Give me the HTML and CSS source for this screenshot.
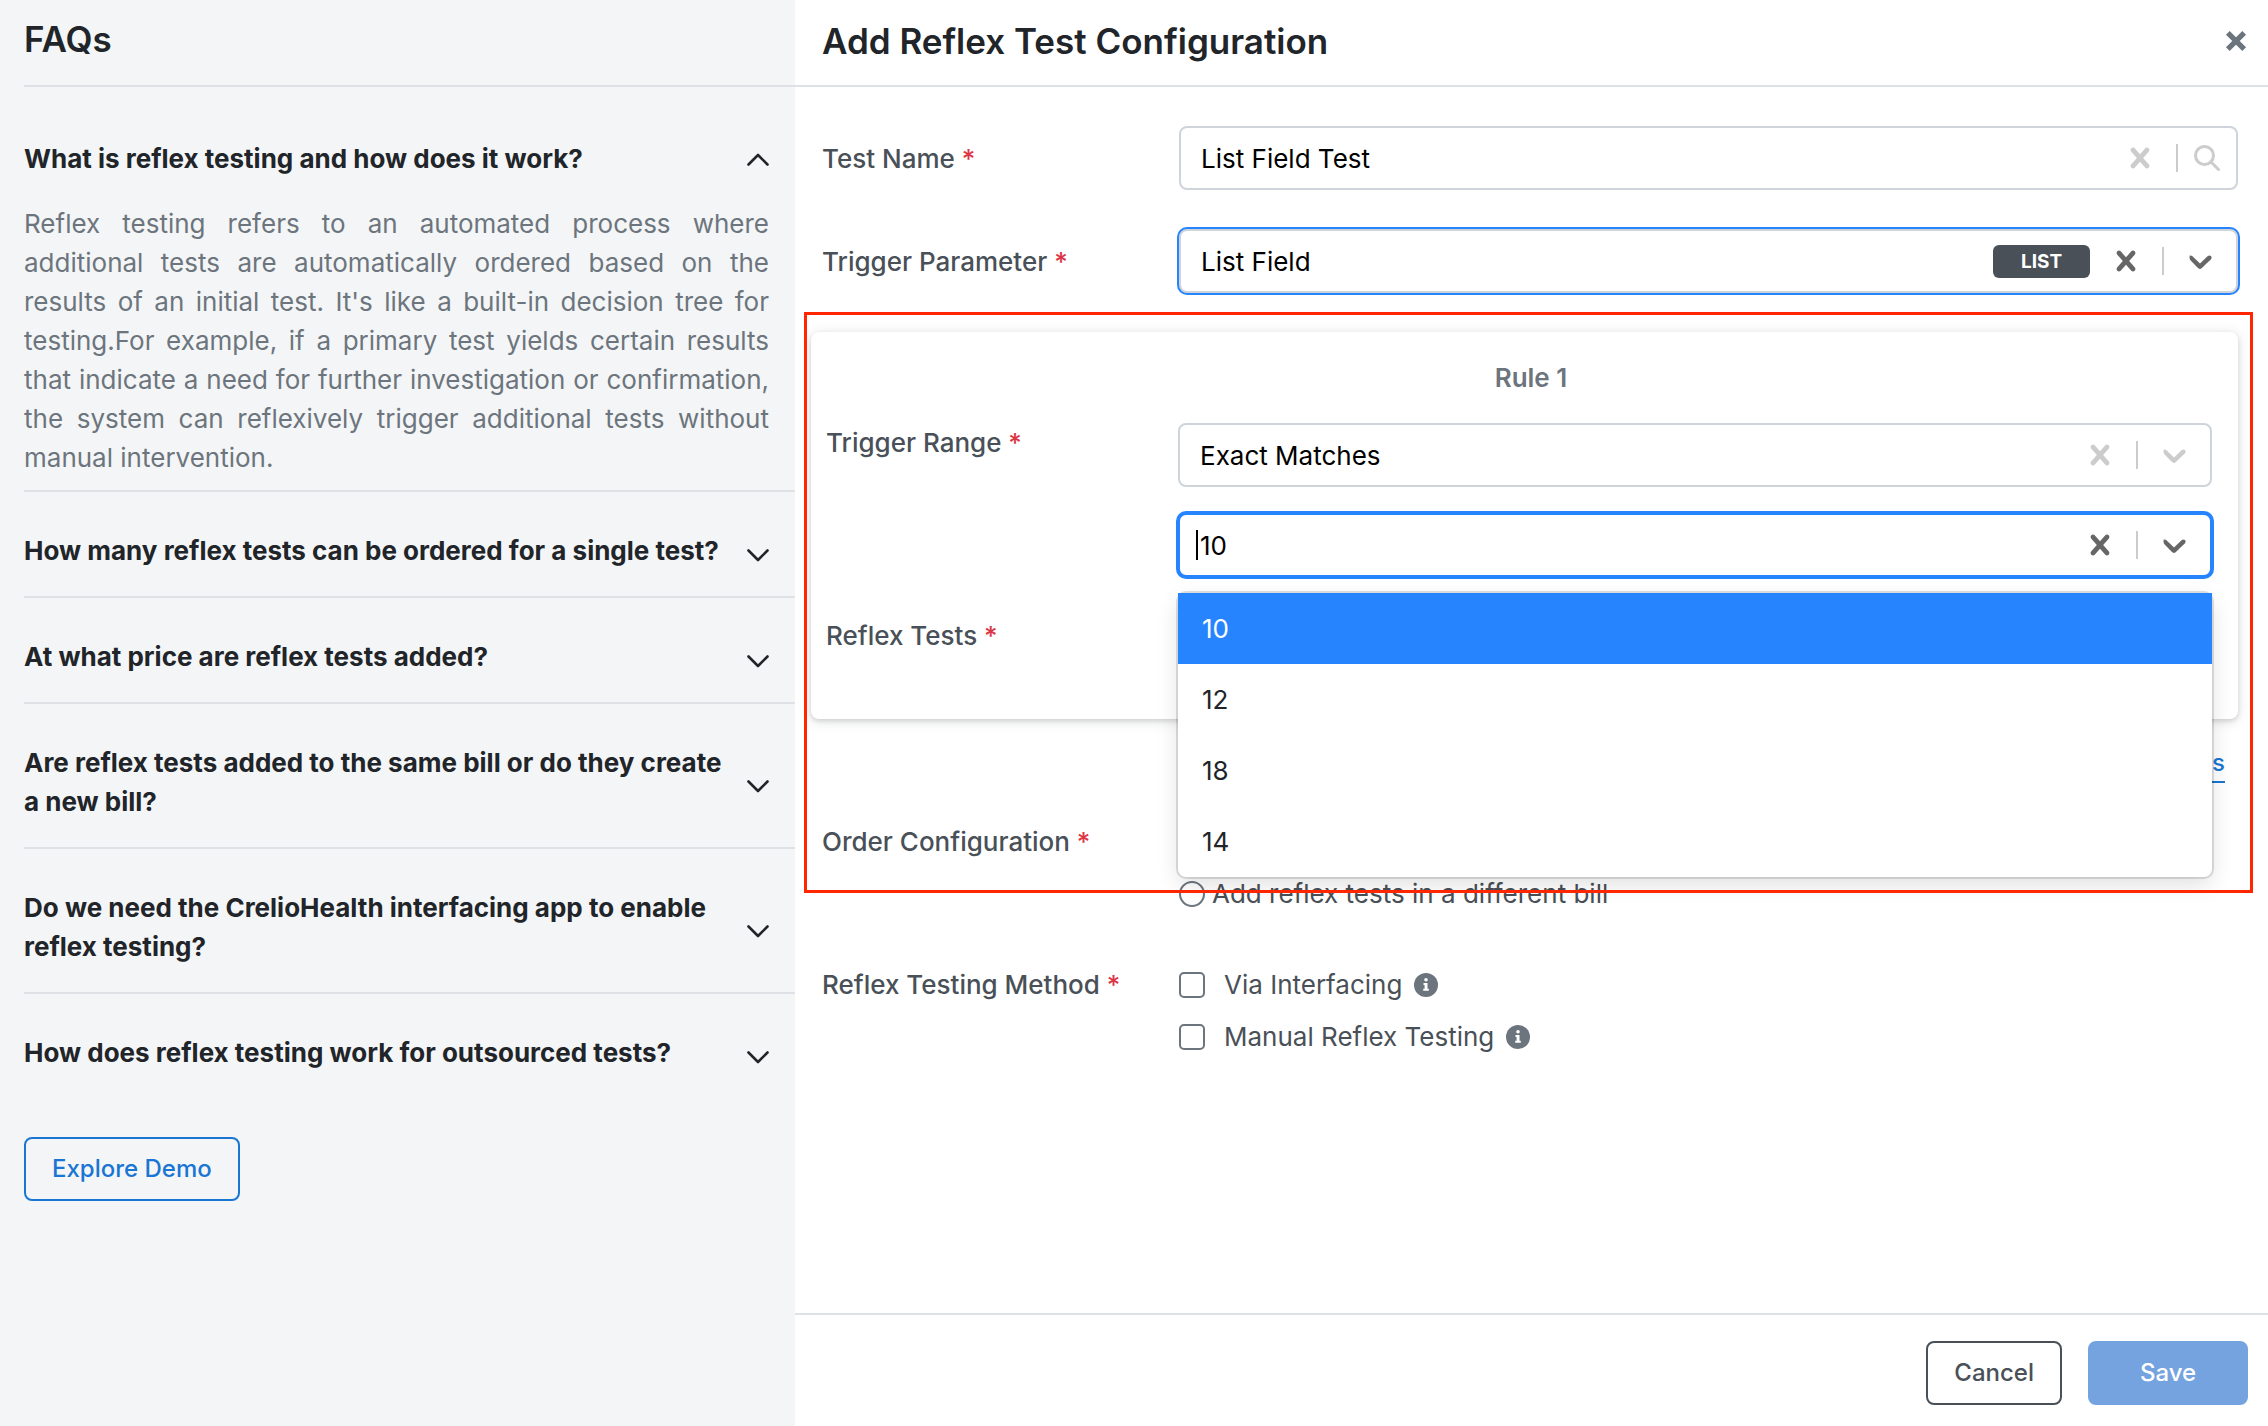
FILE: index.html
```html
<!DOCTYPE html>
<html lang="en">
  <head>
    <meta charset="utf-8">
    <meta name="viewport" content="width=device-width, initial-scale=1">
    <title>Add Reflex Test Configuration</title>
    <link rel="stylesheet" href="styles.css">
  </head>

  <body>
    <!-- shared icons -->
    <svg class="sprite" aria-hidden="true">
      <symbol id="cross" viewBox="0 0 20 20">
        <path d="M14.348 14.849c-0.469 0.469-1.229 0.469-1.697 0l-2.651-3.030-2.651 3.029c-0.469 0.469-1.229 0.469-1.697 0-0.469-0.469-0.469-1.229 0-1.697l2.758-3.15-2.759-3.152c-0.469-0.469-0.469-1.228 0-1.697s1.228-0.469 1.697 0l2.652 3.031 2.651-3.031c0.469-0.469 1.228-0.469 1.697 0s0.469 1.229 0 1.697l-2.758 3.152 2.758 3.15c0.469 0.469 0.469 1.229 0 1.698z"/>
      </symbol>
      <symbol id="down" viewBox="0 0 20 20">
        <path d="M4.516 7.548c0.436-0.446 1.043-0.481 1.576 0l3.908 3.747 3.908-3.747c0.533-0.481 1.141-0.446 1.574 0 0.436 0.445 0.408 1.197 0 1.615-0.406 0.418-4.695 4.502-4.695 4.502-0.217 0.223-0.502 0.335-0.787 0.335s-0.57-0.112-0.789-0.335c0 0-4.287-4.084-4.287-4.502s-0.436-1.17 0-1.615z"/>
      </symbol>
      <symbol id="search" viewBox="0 0 26 26">
        <path d="M10.500 1.500a9 9 0 1 0 0 18a9 9 0 1 0 0-18zM17 17l7.500 7.500" fill="none" stroke="currentColor" stroke-width="3" stroke-linecap="round"/>
      </symbol>
      <symbol id="chevron-down" viewBox="0 0 22 24">
        <path d="M1.500 11.500l9.500 9.500 9.500-9.500" fill="none" stroke="currentColor" stroke-width="2.600" stroke-linecap="round" stroke-linejoin="round"/>
      </symbol>
      <symbol id="chevron-up" viewBox="0 0 22 24">
        <path d="M1.500 17.500l9.500-9.500 9.500 9.500" fill="none" stroke="currentColor" stroke-width="2.600" stroke-linecap="round" stroke-linejoin="round"/>
      </symbol>
      <symbol id="close" viewBox="0 0 22 22">
        <path d="M3.500 3.500l15 15M18.500 3.500l-15 15" fill="none" stroke="currentColor" stroke-width="4.800"/>
      </symbol>
      <symbol id="info" viewBox="0 0 24 24">
        <circle cx="12" cy="12" r="12"/>
        <path d="M12 5a1.800 1.800 0 1 1 0 3.600a1.800 1.800 0 1 1 0-3.600zM9.500 10h4v5.800h1.300v2h-5.600v-2h1.400v-3.800h-1.100z" fill="#fff"/>
      </symbol>
    </svg>

    <div class="page">
      <aside class="faq">
        <h2 class="faq-title">FAQs</h2>
        <div class="faq-list">
          <div class="faq-item first">
            <button type="button" class="faq-question" aria-expanded="true">
              <span>What is reflex testing and how does it work?</span>
              <svg class="chevron"><use href="#chevron-up"/></svg>
            </button>
            <p class="faq-answer">Reflex testing refers to an automated process where additional tests are automatically ordered based on the results of an initial test. It's like a built-in decision tree for testing.For example, if a primary test yields certain results that indicate a need for further investigation or confirmation, the system can reflexively trigger additional tests without manual intervention.</p>
          </div>
          <div class="faq-item">
            <button type="button" class="faq-question" aria-expanded="false">
              <span>How many reflex tests can be ordered for a single test?</span>
              <svg class="chevron"><use href="#chevron-down"/></svg>
            </button>
          </div>
          <div class="faq-item">
            <button type="button" class="faq-question" aria-expanded="false">
              <span>At what price are reflex tests added?</span>
              <svg class="chevron"><use href="#chevron-down"/></svg>
            </button>
          </div>
          <div class="faq-item">
            <button type="button" class="faq-question" aria-expanded="false">
              <span>Are reflex tests added to the same bill or do they create a new bill?</span>
              <svg class="chevron"><use href="#chevron-down"/></svg>
            </button>
          </div>
          <div class="faq-item">
            <button type="button" class="faq-question" aria-expanded="false">
              <span>Do we need the CrelioHealth interfacing app to enable reflex testing?</span>
              <svg class="chevron"><use href="#chevron-down"/></svg>
            </button>
          </div>
          <div class="faq-item">
            <button type="button" class="faq-question" aria-expanded="false">
              <span>How does reflex testing work for outsourced tests?</span>
              <svg class="chevron"><use href="#chevron-down"/></svg>
            </button>
          </div>
        </div>
        <button type="button" class="btn btn-demo">Explore Demo</button>
      </aside>

      <form class="config">
        <header class="config-header">
          <h1>Add Reflex Test Configuration</h1>
          <button type="button" class="close" aria-label="Close"><svg><use href="#close"/></svg></button>
        </header>

        <div class="config-body">
          <div class="row">
            <label class="label" for="testName">Test Name <span class="required">*</span></label>
            <div class="control">
              <input type="text" id="testName" class="value" value="List Field Test">
              <button type="button" class="indicator" aria-label="Clear"><svg><use href="#cross"/></svg></button>
              <span class="separator"></span>
              <button type="button" class="indicator search" aria-label="Search"><svg><use href="#search"/></svg></button>
            </div>
          </div>

          <div class="row">
            <label class="label" for="triggerParameter">Trigger Parameter <span class="required">*</span></label>
            <div class="control active outlined">
              <select id="triggerParameter" class="value"><option>List Field</option></select>
              <span class="badge">LIST</span>
              <button type="button" class="indicator" aria-label="Clear"><svg><use href="#cross"/></svg></button>
              <span class="separator"></span>
              <span class="indicator"><svg><use href="#down"/></svg></span>
            </div>
          </div>

          <div class="highlighted">
            <div class="card">
              <h3 class="card-title">Rule 1</h3>
              <div class="row">
                <label class="label" for="triggerRange">Trigger Range <span class="required">*</span></label>
                <div class="stack">
                  <div class="control">
                    <select id="triggerRange" class="value"><option>Exact Matches</option></select>
                    <button type="button" class="indicator" aria-label="Clear"><svg><use href="#cross"/></svg></button>
                    <span class="separator"></span>
                    <span class="indicator"><svg><use href="#down"/></svg></span>
                  </div>
                  <div class="control active focused">
                    <span class="caret"></span>
                    <input type="text" class="value" value="10" role="combobox" aria-expanded="true" aria-controls="valueMenu" aria-label="Trigger value">
                    <button type="button" class="indicator" aria-label="Clear"><svg><use href="#cross"/></svg></button>
                    <span class="separator"></span>
                    <span class="indicator"><svg><use href="#down"/></svg></span>
                    <ul class="menu" id="valueMenu" role="listbox">
                      <li class="option selected" role="option" aria-selected="true">10</li>
                      <li class="option" role="option">12</li>
                      <li class="option" role="option">18</li>
                      <li class="option" role="option">14</li>
                    </ul>
                  </div>
                </div>
              </div>
              <div class="row">
                <label class="label centered" for="reflexTests">Reflex Tests <span class="required">*</span></label>
                <div class="control">
                  <input type="text" id="reflexTests" class="value">
                </div>
              </div>
            </div>

            <a class="add-rules" href="#">Add Rules</a>

            <div class="row choices-row">
              <span class="label" id="orderLabel">Order Configuration <span class="required">*</span></span>
              <div class="choices" role="radiogroup" aria-labelledby="orderLabel">
                <div class="choice radio"><input type="radio" name="order" aria-label="Same bill"></div>
                <label class="choice radio"><input type="radio" name="order"> Add reflex tests in a different bill</label>
              </div>
            </div>
          </div>

          <div class="row choices-row method">
            <span class="label" id="methodLabel">Reflex Testing Method <span class="required">*</span></span>
            <div class="choices" role="group" aria-labelledby="methodLabel">
              <label class="choice"><input type="checkbox"> Via Interfacing <svg class="info"><use href="#info"/></svg></label>
              <label class="choice"><input type="checkbox"> Manual Reflex Testing <svg class="info"><use href="#info"/></svg></label>
            </div>
          </div>
        </div>

        <footer class="config-footer">
          <button type="button" class="btn btn-cancel">Cancel</button>
          <button type="submit" class="btn btn-save">Save</button>
        </footer>
      </form>
    </div>
  </body>
</html>
```

FILE: styles.css
```css
* {
  box-sizing: border-box;
}
body {
  margin: 0;
  font-family: Inter, "Liberation Sans", sans-serif;
  font-size: 26px;
  line-height: 39px;
  color: #212529;
  background: #fff;
}
h1, h2, h3, p, ul {
  margin: 0;
  padding: 0;
}
button, input, select {
  margin: 0;
  font: inherit;
  color: inherit;
}
button {
  padding: 0;
  border: 0;
  background: none;
  cursor: pointer;
}
svg {
  fill: currentColor;
}
.sprite {
  display: none;
}
.page {
  display: flex;
  min-height: 100vh;
}

/* FAQ sidebar */
.faq {
  flex: 0 0 795px;
  padding-left: 24px;
  background: #f4f5f7;
}
.faq-title {
  padding: 12px 0 19px;
  font-size: 35px;
  line-height: 54px;
  font-weight: 600;
  border-bottom: 2px solid #dee2e6;
}
.faq-item {
  padding-top: 39px;
  border-bottom: 2px solid #dee2e6;
}
.faq-item.first {
  padding-top: 52px;
}
.faq-item:last-child {
  border-bottom: 0;
}
.faq-question {
  display: flex;
  align-items: center;
  justify-content: space-between;
  gap: 6px;
  width: 100%;
  padding: 0 26px 26px 0;
  font-weight: 700;
  text-align: left;
}
.chevron {
  flex: none;
  width: 22px;
  height: 24px;
}
.faq-answer {
  padding: 0 26px 13px 0;
  color: #6c757d;
  text-align: justify;
}

/* buttons */
.btn {
  height: 64px;
  padding: 0 26px;
  font-size: 24px;
  line-height: 36px;
  font-weight: 500;
  border: 2px solid;
  border-radius: 8px;
}
.btn-demo {
  margin-top: 39px;
  color: #1976d2;
}
.btn-cancel {
  color: #495057;
}
.btn-save {
  width: 160px;
  color: #fff;
  background: #75a3e0;
  border-color: #75a3e0;
}

/* configuration form */
.config {
  display: flex;
  flex: 1;
  flex-direction: column;
  min-width: 0;
}
.config-header {
  display: flex;
  align-items: center;
  justify-content: space-between;
  padding: 14px 20px 17px 27px;
  border-bottom: 2px solid #dee2e6;
}
.config-header h1 {
  font-size: 35px;
  line-height: 54px;
  font-weight: 600;
}
.close {
  display: flex;
  color: #6c757d;
}
.close svg {
  width: 24px;
  height: 24px;
}
.config-body {
  flex: 1;
  padding: 39px 30px 39px 16px;
}
.row {
  display: grid;
  grid-template-columns: 357px 1fr;
  align-items: center;
  margin-bottom: 39px;
  padding-left: 11px;
}
.label {
  font-weight: 500;
  color: #495057;
}
.required {
  color: #dc3545;
}
.control {
  position: relative;
  display: flex;
  align-items: center;
  height: 64px;
  color: #ccc;
  background: #fff;
  border: 2px solid #ced4da;
  border-radius: 8px;
}
.control.active {
  color: #666;
}
.control.outlined {
  box-shadow: 0 0 0 2px #2684ff;
}
.control.focused {
  border-color: #2684ff;
  box-shadow: 0 0 0 2px #2684ff;
}
.value {
  flex: 1;
  min-width: 0;
  padding: 0 0 0 20px;
  color: #000;
  background: none;
  border: 0;
  outline: 0;
  appearance: none;
}
.caret {
  width: 2px;
  height: 30px;
  margin: 0 2px 0 16px;
  background: #000;
}
.caret + .value {
  padding-left: 0;
}
.badge {
  width: 97px;
  font-size: 19px;
  line-height: 33px;
  font-weight: 700;
  text-align: center;
  color: #fff;
  background: #495057;
  border-radius: 6px;
}
.indicator {
  display: flex;
  padding: 0 16px;
}
.indicator svg {
  width: 40px;
  height: 40px;
}
.indicator.search svg {
  width: 26px;
  height: 26px;
}
.separator {
  width: 2px;
  height: 28px;
  background: #ccc;
}
.menu {
  position: absolute;
  top: 78px;
  left: -2px;
  right: -2px;
  z-index: 1;
  list-style: none;
  color: #212529;
  background: #fff;
  border-radius: 8px;
  box-shadow: 0 0 0 2px rgba(0,0,0,0.12), 0 8px 22px rgba(0,0,0,0.12);
}
.option {
  padding: 16px 24px;
}
.option.selected {
  color: #fff;
  background: #2684ff;
}

.highlighted {
  position: relative;
}
.highlighted::after {
  content: "";
  position: absolute;
  inset: -20px -15px 20px -7px;
  z-index: 2;
  border: 3px solid #ff2600;
  pointer-events: none;
}
.card {
  display: flex;
  flex-direction: column;
  gap: 26px;
  padding: 26px 26px 52px 15px;
  border-radius: 8px;
  box-shadow: 0 2px 12px 1px rgba(60,64,67,0.15), 0 2px 4px rgba(60,64,67,0.15);
}
.card-title {
  padding-left: 24px;
  font-size: 26px;
  font-weight: 600;
  text-align: center;
  color: #6c757d;
}
.card .row {
  grid-template-columns: 352px 1fr;
  align-items: start;
  margin: 0;
  padding: 0;
}
.card .centered {
  align-self: center;
}
.stack {
  display: flex;
  flex-direction: column;
  gap: 26px;
}
.add-rules {
  display: block;
  width: fit-content;
  margin: 26px 13px 39px auto;
  font-size: 24px;
  line-height: 36px;
  font-weight: 500;
  color: #1976d2;
  text-decoration: none;
  border-bottom: 2px solid;
}

/* radios and checkboxes */
.choices-row {
  align-items: start;
}
.method {
  margin-top: 52px;
}
.highlighted .choices-row {
  margin-bottom: 0;
}
.choices {
  display: flex;
  flex-direction: column;
  gap: 13px;
}
.choice {
  display: flex;
  align-items: center;
  gap: 12px;
  height: 39px;
  color: #495057;
}
.choice input {
  width: 26px;
  height: 26px;
  margin-right: 7px;
  background: #fff;
  border: 2px solid #6c757d;
  border-radius: 5px;
  appearance: none;
}
.choice.radio {
  gap: 0;
}
.choice.radio input {
  border-radius: 50%;
}
.info {
  width: 24px;
  height: 24px;
  color: #6c757d;
}

.config-footer {
  display: flex;
  justify-content: flex-end;
  gap: 26px;
  padding: 26px 20px 21px;
  border-top: 2px solid #dee2e6;
}
```
